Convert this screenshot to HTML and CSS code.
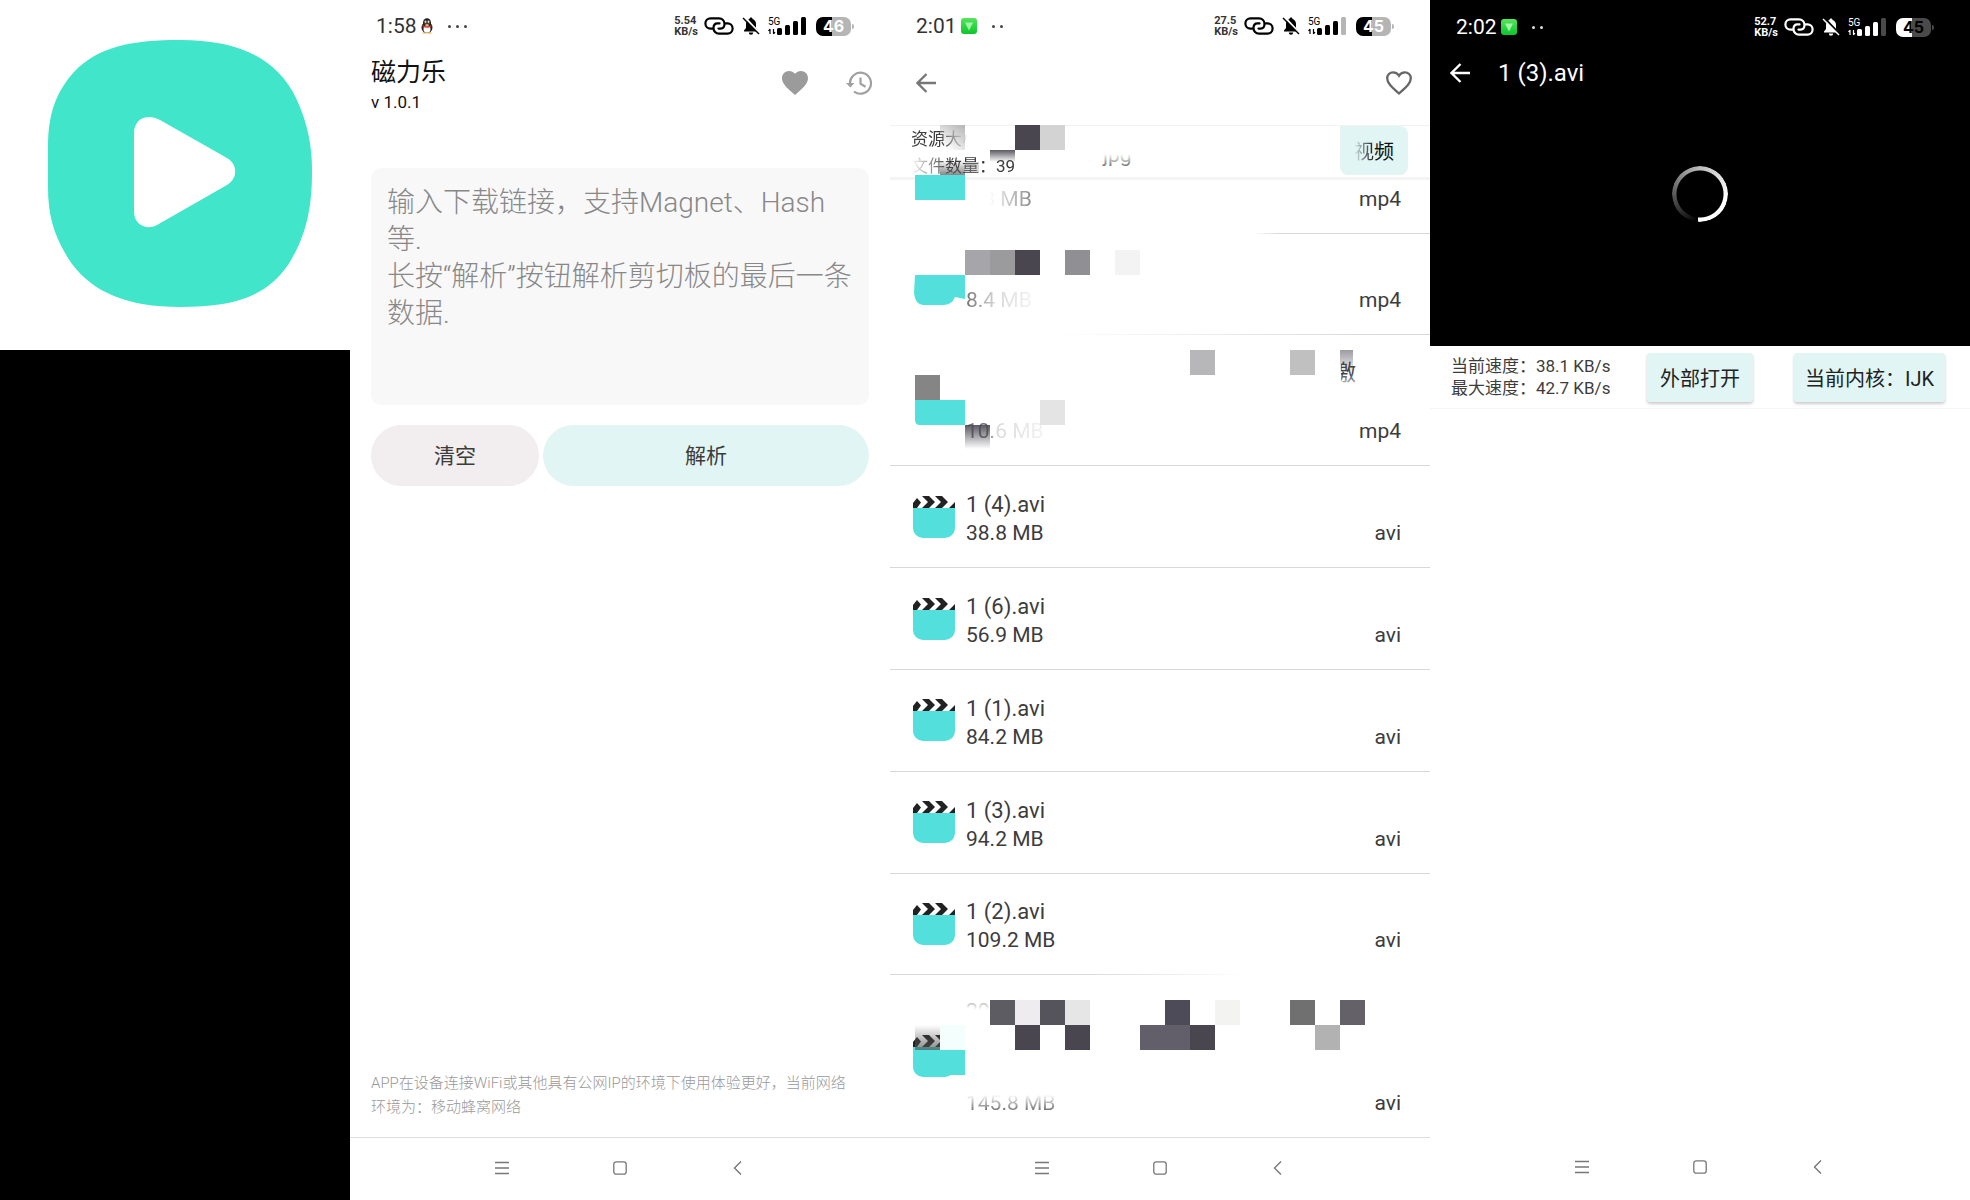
FILE: index.html
```html
<!DOCTYPE html>
<html lang="zh-CN">

<head>
    <meta charset="UTF-8">
    <meta name="viewport" content="width=device-width, initial-scale=1.0">
    <title>磁力乐</title>
    <link rel="stylesheet" href="styles.css">
</head>

<body>
    <!-- Shared icons -->
    <svg class="sprite" aria-hidden="true">
        <symbol id="link" viewBox="0 0 30 18">
            <path d="M9 11.6H6.5a5.1 5.1 0 0 1 0-10.200H15c3.200 0 5.500 2.500 5.500 5.600 0 2.800-1.700 4.600-4 4.600h-2M21 6.400h2.500a5.100 5.100 0 0 1 0 10.200H15c-3.200 0-5.500-2.500-5.500-5.600 0-2.800 1.700-4.600 4-4.600h2" fill="none" stroke="currentColor" stroke-width="2.200" stroke-linecap="round" />
        </symbol>
        <symbol id="bell" viewBox="0 0 18 18">
            <path d="M9 .5c.9 0 1.500.6 1.500 1.400C12.800 2.600 14 4.500 14 7v4l2 2.500v1H2v-1L4 11V7c0-2.500 1.200-4.400 3.500-5.100C7.500 1.100 8.100.5 9 .5zM6.800 15.500h4.400a2.200 2.200 0 0 1-4.400 0z" fill="currentColor" />
            <path class="slash" d="M2.500 0L18 16.500" stroke-width="2" />
            <path d="M1 1l16 16" stroke="currentColor" stroke-width="1.500" />
        </symbol>
        <symbol id="signal" viewBox="0 0 40 18">
            <path d="M2 17v-5M2 12l-1.500 2M5.500 12v5M5.500 17l1.500-2" stroke="currentColor" stroke-width="1.200" fill="none" />
            <rect x="9" y="11" width="5" height="7" rx="1.500" fill="currentColor" />
            <rect x="17" y="8" width="5" height="10" rx="1.500" fill="currentColor" />
            <rect x="25" y="4" width="5" height="14" rx="1.500" fill="currentColor" />
            <rect class="bar4" x="33" y="0" width="5" height="18" rx="1.500" />
        </symbol>
        <symbol id="qq" viewBox="0 0 12 16">
            <ellipse cx="6" cy="9.500" rx="5.500" ry="5.500" fill="#26201f" />
            <ellipse cx="6" cy="5" rx="4" ry="4.800" fill="#26201f" />
            <ellipse cx="6" cy="11" rx="3.500" ry="3.800" fill="#fff" />
            <ellipse cx="4.500" cy="3.800" rx="1" ry="1.300" fill="#ddd" />
            <ellipse cx="7.500" cy="3.800" rx="1" ry="1.300" fill="#ddd" />
            <path d="M1.500 7q4.500 2.500 9 0v1.500q-4.500 2.500-9 0z" fill="#d8322b" />
            <path d="M3 5.700h6L6 7.200zM1.500 14.500h4v1h-4zM6.500 14.500h4v1h-4z" fill="#f1a62c" />
        </symbol>
        <symbol id="badge" viewBox="0 0 16 16">
            <rect width="16" height="16" rx="3" fill="url(#badgeFill)" />
            <path d="M4 4.500h8L8 12.500z" fill="#a5f2aa" />
        </symbol>
        <symbol id="back" viewBox="0 0 20 20">
            <path d="M10.500 1L1.500 10l9 9M1.500 10H20" fill="none" stroke="currentColor" stroke-width="2.300" />
        </symbol>
        <symbol id="nav-menu" viewBox="0 0 14 14">
            <path d="M0 1.500h14M0 7h14M0 12.500h14" stroke="currentColor" stroke-width="1.300" />
        </symbol>
        <symbol id="nav-home" viewBox="0 0 14 14">
            <rect x=".8" y=".8" width="12.400" height="12.400" rx="2.500" fill="none" stroke="currentColor" stroke-width="1.300" />
        </symbol>
        <symbol id="nav-back" viewBox="0 0 14 14">
            <path d="M10 .5L3.500 7l6.500 6.500" fill="none" stroke="currentColor" stroke-width="1.400" />
        </symbol>
        <symbol id="clap" viewBox="0 0 42 42">
            <path d="M0 12h42v20a10 10 0 0 1-10 10H10A10 10 0 0 1 0 32z" fill="#53dfdc" />
            <path d="M0 12V7l4-5 4 4.500L4 12zM9 0h7l6 6-6 6H9l6-6zM22 0h7l6 6-6 6h-7l6-6zM42 6v6h-6z" fill="#222" />
        </symbol>
        <defs>
            <linearGradient id="badgeFill" x2="0" y2="1">
                <stop stop-color="#55e55c" />
                <stop offset="1" stop-color="#0cc52c" />
            </linearGradient>
        </defs>
    </svg>

    <main class="gallery">
        <section class="logo-panel">
            <div class="logo-box">
                <svg viewBox="0 0 350 350" role="img" aria-label="磁力乐">
                    <path d="M180 40C238 40 277 58 296 98C308 124 312 146 312 171C312 206 307 235 288 265C266 297 233 307 180 307C127 307 93 292 72 264C54 238 48 216 48 187V146C48 114 56 92 74 72C98 46 134 40 180 40Z" fill="#40e5ca" />
                    <path d="M134 133C134 118 148 113 160 120L227 158C238 164 238 179 227 185L157 225C146 231 134 224 134 212Z" fill="#fff" />
                </svg>
            </div>
        </section>

        <!-- Home screen -->
        <section class="phone">
            <div class="status">
                <span class="time">1:58</span>
                <svg class="qq"><use href="#qq" /></svg>
                <span class="dots"><i></i><i></i><i></i></span>
                <span class="speed"><span>5.54</span><span>KB/s</span></span>
                <svg class="link"><use href="#link" /></svg>
                <svg class="bell"><use href="#bell" /></svg>
                <span class="signal full"><b>5G</b><svg><use href="#signal" /></svg></span>
                <span class="battery">46</span>
            </div>
            <header class="home-head">
                <div>
                    <h1>磁力乐</h1>
                    <p>v 1.0.1</p>
                </div>
                <div class="head-actions">
                    <button class="icon-btn" aria-label="收藏">
                        <svg viewBox="0 0 26 24"><path d="M13 24l-2-1.700C4 16 0 12.300 0 7.200 0 3.100 3.100 0 7.100 0 9.400 0 11.600 1.100 13 2.800 14.400 1.100 16.600 0 18.900 0 22.900 0 26 3.100 26 7.200c0 5.100-4 8.800-11 15.100z" fill="#9b9b9b" /></svg>
                    </button>
                    <button class="icon-btn" aria-label="历史">
                        <svg viewBox="0 0 26 24"><path d="M4 13A10.500 10.500 0 1 1 8 20.500M14.500 6.500v6.200l5 3" fill="none" stroke="#a0a0a0" stroke-width="2.200" /><path d="M0 12h8.500l-4.200 4.500z" fill="#a0a0a0" /></svg>
                    </button>
                </div>
            </header>
            <form class="parse-form">
                <textarea aria-label="下载链接" placeholder="输入下载链接，支持Magnet、Hash等.&#10;长按“解析”按钮解析剪切板的最后一条数据."></textarea>
                <div class="form-actions">
                    <button type="reset" class="clear-btn">清空</button>
                    <button type="button" class="parse-btn">解析</button>
                </div>
            </form>
            <p class="tip">APP在设备连接WiFi或其他具有公网IP的环境下使用体验更好，当前网络<br>环境为：移动蜂窝网络</p>
            <nav class="navbar lined">
                <button aria-label="菜单"><svg><use href="#nav-menu" /></svg></button>
                <button aria-label="主页"><svg><use href="#nav-home" /></svg></button>
                <button aria-label="返回"><svg><use href="#nav-back" /></svg></button>
            </nav>
        </section>

        <!-- File list -->
        <section class="phone">
            <div class="status">
                <span class="time">2:01</span>
                <svg class="badge"><use href="#badge" /></svg>
                <span class="dots"><i></i><i></i></span>
                <span class="speed"><span>27.5</span><span>KB/s</span></span>
                <svg class="link"><use href="#link" /></svg>
                <svg class="bell"><use href="#bell" /></svg>
                <span class="signal"><b>5G</b><svg><use href="#signal" /></svg></span>
                <span class="battery">45</span>
            </div>
            <header class="list-head">
                <button class="icon-btn back" aria-label="返回"><svg><use href="#back" /></svg></button>
                <button class="icon-btn" aria-label="收藏">
                    <svg viewBox="0 0 26 24"><path d="M13 22.500l-1.500-1.300C5 15.300 1.200 11.800 1.200 7.300c0-3.400 2.600-6 5.900-6 2.400 0 4.700 1.400 5.900 3.500 1.200-2.100 3.500-3.500 5.900-3.500 3.300 0 5.900 2.600 5.900 6 0 4.500-3.800 8-10.300 13.900z" fill="none" stroke="#666" stroke-width="2.300" /></svg>
                </button>
            </header>
            <div class="summary">
                <div class="summary-text">
                    <p class="fade-size">资源大小</p>
                    <p class="fade-count">文件数量：39</p>
                </div>
                <button class="video-btn"><span>视</span>频</button>
            </div>
            <ul class="files">
                <li class="file line-right-short">
                    <div class="info"><span class="size fade-a">1.3 MB</span></div>
                    <span class="ext">mp4</span>
                </li>
                <li class="file line-right">
                    <div class="info"><span class="size fade-b">8.4 MB</span></div>
                    <span class="ext">mp4</span>
                </li>
                <li class="file">
                    <div class="info"><span class="size fade-c">10.6 MB</span></div>
                    <span class="ext">mp4</span>
                </li>
                <li class="file">
                    <svg class="clap"><use href="#clap" /></svg>
                    <div class="info"><span class="name">1 (4).avi</span><span class="size">38.8 MB</span></div>
                    <span class="ext">avi</span>
                </li>
                <li class="file">
                    <svg class="clap"><use href="#clap" /></svg>
                    <div class="info"><span class="name">1 (6).avi</span><span class="size">56.9 MB</span></div>
                    <span class="ext">avi</span>
                </li>
                <li class="file">
                    <svg class="clap"><use href="#clap" /></svg>
                    <div class="info"><span class="name">1 (1).avi</span><span class="size">84.2 MB</span></div>
                    <span class="ext">avi</span>
                </li>
                <li class="file">
                    <svg class="clap"><use href="#clap" /></svg>
                    <div class="info"><span class="name">1 (3).avi</span><span class="size">94.2 MB</span></div>
                    <span class="ext">avi</span>
                </li>
                <li class="file line-left">
                    <svg class="clap"><use href="#clap" /></svg>
                    <div class="info"><span class="name">1 (2).avi</span><span class="size">109.2 MB</span></div>
                    <span class="ext">avi</span>
                </li>
                <li class="file last">
                    <svg class="clap"><use href="#clap" /></svg>
                    <div class="info"><span class="size fade-d">145.8 MB</span></div>
                    <span class="ext">avi</span>
                </li>
            </ul>
            <nav class="navbar lined">
                <button aria-label="菜单"><svg><use href="#nav-menu" /></svg></button>
                <button aria-label="主页"><svg><use href="#nav-home" /></svg></button>
                <button aria-label="返回"><svg><use href="#nav-back" /></svg></button>
            </nav>

            <!-- Mosaic over private names, 25px cells -->
            <svg class="mosaic" width="540" height="1137" viewBox="0 0 540 1137" aria-hidden="true">
                <defs>
                    <linearGradient id="fadeDown" x2="0" y2="1">
                        <stop stop-color="#494650" stop-opacity=".9" />
                        <stop offset="1" stop-color="#494650" stop-opacity="0" />
                    </linearGradient>
                    <linearGradient id="fadeUp" x2="0" y2="1">
                        <stop stop-color="#555" stop-opacity="0" />
                        <stop offset="1" stop-color="#555" stop-opacity=".7" />
                    </linearGradient>
                    <linearGradient id="fadeCorner" x1="1" y1="0" x2=".3" y2="1">
                        <stop stop-color="#b4b4b4" />
                        <stop offset="1" stop-color="#b4b4b4" stop-opacity="0" />
                    </linearGradient>
                    <linearGradient id="whiteOut" x2="0" y2="1">
                        <stop offset=".4" stop-color="#fff" />
                        <stop offset="1" stop-color="#fff" stop-opacity="0" />
                    </linearGradient>
                    <linearGradient id="whiteUp" x2="0" y2="1">
                        <stop stop-color="#fff" stop-opacity="0" />
                        <stop offset=".5" stop-color="#fff" />
                    </linearGradient>
                </defs>
                <rect x="50" y="125" width="25" height="25" fill="url(#fadeCorner)" />
                <rect x="125" y="125" width="25" height="25" fill="#494650" />
                <rect x="150" y="125" width="25" height="25" fill="#d3d3d4" />
                <rect x="100" y="150" width="25" height="12" fill="url(#fadeDown)" />
                <rect x="50" y="160" width="25" height="15" fill="url(#fadeUp)" />
                <rect x="75" y="162" width="14" height="11" fill="#999" opacity=".4" />
                <text x="213" y="162" font-size="21" fill="#777">jpg</text>
                <rect x="205" y="146" width="45" height="20" fill="url(#whiteOut)" />
                <rect x="25" y="175" width="50" height="25" fill="#53dfdc" />

                <path d="M75 250h25v25H75z" fill="#a6a6aa" />
                <path d="M100 250h25v25h-25z" fill="#9b9b9e" />
                <path d="M125 250h25v25h-25z" fill="#494650" />
                <path d="M175 250h25v25h-25z" fill="#8f8f94" />
                <path d="M225 250h25v25h-25z" fill="#f3f3f3" />
                <path d="M25 275h50v24l-10-2q-3 8-12 8H33q-8-1-9-12z" fill="#53dfdc" />

                <path d="M300 350h25v25h-25z" fill="#b7b7ba" />
                <path d="M400 350h25v25h-25z" fill="#c0c0c1" />
                <text x="444" y="380" font-size="22" fill="#444">激</text>
                <path d="M440 358h11v30h-11z" fill="#fff" />
                <path d="M450 374h18v14h-18z" fill="url(#whiteUp)" opacity=".5" />
                <path d="M450 350h13v25h-13z" fill="url(#fadeDown)" opacity=".6" />
                <path d="M25 375h25v25H25z" fill="#858586" />
                <path d="M25 400h50v25H30q-5 0-5-5z" fill="#53dfdc" />
                <path d="M150 400h25v25h-25z" fill="#e4e4e4" />
                <path d="M75 425h25v24H75z" fill="url(#fadeDown)" />

                <text x="76" y="1018" font-size="21" fill="#999">20</text>
                <path d="M75 998h25v24H75z" fill="url(#whiteUp)" />
                <path d="M25 1025h25v25H25z" fill="url(#fadeUp)" />
                <path d="M50 1025h25v25H50z" fill="#f3fefd" />
                <path d="M40 1050h35v25H40z" fill="#53dfdc" />
                <path d="M100 1000h25v25h-25z" fill="#5d5c62" />
                <path d="M125 1000h25v25h-25z" fill="#eeecee" />
                <path d="M150 1000h25v25h-25z" fill="#55535b" />
                <path d="M175 1000h25v25h-25z" fill="#e6e6e7" />
                <path d="M125 1025h25v25h-25zM175 1025h25v25h-25zM300 1025h25v25h-25z" fill="#494650" />
                <path d="M250 1025h50v25h-50z" fill="#625f6b" />
                <path d="M275 1000h25v25h-25z" fill="#4e4b59" />
                <path d="M325 1000h25v25h-25z" fill="#f3f3f2" />
                <path d="M400 1000h25v25h-25z" fill="#707070" />
                <path d="M425 1025h25v25h-25z" fill="#b2b2b3" />
                <path d="M450 1000h25v25h-25z" fill="#646268" />
            </svg>
        </section>

        <!-- Player -->
        <section class="phone">
            <div class="player">
                <div class="status dark">
                    <span class="time">2:02</span>
                    <svg class="badge"><use href="#badge" /></svg>
                    <span class="dots"><i></i><i></i></span>
                    <span class="speed"><span>52.7</span><span>KB/s</span></span>
                    <svg class="link"><use href="#link" /></svg>
                    <svg class="bell"><use href="#bell" /></svg>
                    <span class="signal"><b>5G</b><svg><use href="#signal" /></svg></span>
                    <span class="battery">45</span>
                </div>
                <header class="player-head">
                    <button class="icon-btn back" aria-label="返回"><svg><use href="#back" /></svg></button>
                    <h2>1 (3).avi</h2>
                </header>
                <div class="spinner"></div>
            </div>
            <div class="player-bar">
                <div class="speeds">
                    <p>当前速度：38.1 KB/s</p>
                    <p>最大速度：42.7 KB/s</p>
                </div>
                <button class="flat-btn">外部打开</button>
                <button class="flat-btn core">当前内核：IJK</button>
            </div>
            <nav class="navbar">
                <button aria-label="菜单"><svg><use href="#nav-menu" /></svg></button>
                <button aria-label="主页"><svg><use href="#nav-home" /></svg></button>
                <button aria-label="返回"><svg><use href="#nav-back" /></svg></button>
            </nav>
        </section>
    </main>
</body>

</html>
```
FILE: styles.css
```css
* {
    box-sizing: border-box;
    margin: 0;
    padding: 0;
}

body {
    background: #fff;
    color: #3c3c3c;
    font-family: Roboto, "Noto Sans CJK SC", sans-serif;
}

button {
    border: none;
    background: none;
    color: inherit;
    font-family: inherit;
    cursor: pointer;
}

.sprite {
    position: absolute;
    width: 0;
    height: 0;
}

.gallery {
    display: grid;
    grid-template-columns: 35fr 54fr 54fr 54fr;
    min-height: 100vh;
}

.logo-panel {
    background: #000;
}

.logo-box {
    background: #fff;
    aspect-ratio: 1 / 1;
}

.logo-box svg {
    display: block;
    width: 100%;
}

.phone {
    position: relative;
    display: flex;
    flex-direction: column;
    min-width: 0;
    background: #fff;
}

/* status bar */
.status {
    --weak: #b5b5b5;
    --slash: #fff;
    display: flex;
    align-items: center;
    height: 52px;
    padding: 0 39px 0 26px;
    color: #000;
}

.status .time {
    margin-right: 4px;
    font-size: 21px;
    color: #333;
}

.status .qq {
    width: 12px;
    height: 16px;
}

.status .badge {
    width: 16px;
    height: 16px;
}

.dots {
    display: flex;
    gap: 5px;
    margin-left: 15px;
}

.dots i {
    width: 3px;
    height: 3px;
    border-radius: 50%;
    background: #444;
}

.speed {
    display: flex;
    flex-direction: column;
    margin-left: auto;
    font-size: 11px;
    font-weight: 700;
    line-height: 11px;
    color: #333;
}

.status .link {
    width: 30px;
    height: 18px;
    margin-left: 6px;
}

.status .bell {
    width: 18px;
    height: 18px;
    margin-left: 8px;
}

.slash {
    stroke: var(--slash);
}

.signal {
    position: relative;
    width: 40px;
    height: 18px;
    margin-left: 8px;
}

.signal svg {
    display: block;
    width: 40px;
    height: 18px;
}

.signal b {
    position: absolute;
    top: 0;
    left: 0;
    font-size: 10px;
    font-weight: 400;
    line-height: 10px;
}

.bar4 {
    fill: var(--weak);
}

.full {
    --weak: #000;
}

.battery {
    position: relative;
    width: 35px;
    height: 19px;
    margin-left: 8px;
    border-radius: 7px;
    background: linear-gradient(to right, #000 45%, var(--weak) 45%);
    color: #fff;
    font-family: Inter, sans-serif;
    font-size: 16px;
    font-weight: 700;
    line-height: 19px;
    text-align: center;
}

.battery::after {
    content: "";
    position: absolute;
    top: 7px;
    right: -3px;
    width: 2px;
    height: 5px;
    border-radius: 0 2px 2px 0;
    background: var(--weak);
}

.dark,
.dark .time,
.dark .speed {
    color: #fff;
}

.dark {
    --weak: #4a4a4a;
    --slash: #000;
    height: 54px;
}

.dark .dots i {
    background: #ddd;
}

.dark .battery {
    background: linear-gradient(to right, #fff 45%, var(--weak) 45%);
    color: #000;
}

/* home */
.home-head {
    display: flex;
    justify-content: space-between;
    align-items: flex-start;
    padding: 4px 18px 0 21px;
    height: 116px;
    color: #111;
}

.home-head h1 {
    font-size: 25px;
    font-weight: 400;
    line-height: 34px;
}

.home-head p {
    font-size: 17px;
    line-height: 24px;
}

.head-actions {
    display: flex;
    gap: 38px;
    padding-top: 15px;
}

.icon-btn svg {
    display: block;
    width: 26px;
    height: 24px;
}

.icon-btn.back svg {
    width: 20px;
    height: 20px;
}

.parse-form {
    padding: 0 21px;
}

.parse-form textarea {
    display: block;
    width: 100%;
    height: 237px;
    padding: 16px;
    border: none;
    border-radius: 10px;
    background: #f8f8f8;
    resize: none;
    overflow: hidden;
    font-family: inherit;
    font-size: 28px;
    font-weight: 300;
    line-height: 37px;
}

.parse-form textarea::placeholder {
    color: #888;
}

.form-actions {
    display: flex;
    gap: 4px;
    margin-top: 20px;
}

.form-actions button {
    height: 61px;
    padding-bottom: 3px;
    border-radius: 31px;
    font-size: 21px;
}

.clear-btn {
    flex: 168;
    background: #f2edee;
}

.parse-btn {
    flex: 326;
    background: #e1f5f4;
}

.tip {
    margin-top: auto;
    padding: 0 21px 18px;
    color: #999;
    font-size: 15px;
    font-weight: 300;
    line-height: 24px;
}

.navbar {
    display: flex;
    justify-content: center;
    align-items: center;
    gap: 78px;
    height: 63px;
    color: #777;
}

.navbar.lined {
    border-top: 1px solid #ddd;
}

.navbar button {
    width: 40px;
    height: 40px;
}

.navbar svg {
    width: 14px;
    height: 14px;
}

/* file list */
.list-head {
    display: flex;
    justify-content: space-between;
    align-items: center;
    height: 74px;
    padding: 0 18px 12px 26px;
    border-bottom: 1px solid #f2f2f2;
}

.list-head .back {
    color: #777;
}

.summary {
    display: flex;
    justify-content: space-between;
    height: 54px;
    padding-left: 21px;
    padding-right: 22px;
    border-bottom: 3px solid #f4f4f4;
    font-size: 17px;
}

.summary p {
    line-height: 27px;
}

.fade-size {
    width: 68px;
    mask-image: linear-gradient(to right, #000 50%, transparent 85%);
}

.fade-count {
    mask-image: linear-gradient(to right, transparent, #000 36%);
}

.video-btn {
    width: 68px;
    height: 49px;
    border-radius: 0 8px 8px 8px;
    background: #e1f5f4;
    color: #111;
    font-size: 20px;
}

.video-btn span {
    mask-image: linear-gradient(to right, transparent, #000);
}

/* row heights share the free space */
.files {
    display: grid;
    flex: 1;
    grid-template-rows: 54fr 101fr 132fr repeat(5, 102fr) 162fr;
    list-style: none;
}

.file {
    display: flex;
    align-items: flex-end;
    min-height: 0;
    padding: 0 29px 19px 23px;
    border-bottom: 1px solid #d8d8d8;
}

.file.last {
    border-bottom: none;
}

.line-right-short {
    border-image: linear-gradient(to right, #fff 67%, #d8d8d8 72%) 1;
}

.line-right {
    border-image: linear-gradient(to right, #fff 30%, #d8d8d8 90%) 1;
}

.line-left {
    border-image: linear-gradient(to right, #d8d8d8 35%, #fff 66%) 1;
}

.clap {
    align-self: center;
    width: 42px;
    height: 42px;
    margin-right: -42px;
    margin-bottom: -19px;
}

.info {
    display: flex;
    flex-direction: column;
    align-items: flex-start;
    padding-left: 53px;
}

.name {
    font-size: 22px;
    line-height: 29px;
}

.size,
.ext {
    font-size: 21px;
    line-height: 29px;
}

.ext {
    margin-left: auto;
}

.fade-a {
    mask-image: linear-gradient(to right, transparent 35%, #0009);
}

.fade-b {
    mask-image: linear-gradient(to right, #000b, #0003 45%, #0001);
}

.fade-c {
    mask-image: linear-gradient(to right, #000b 30%, #0003 38%, #0001);
}

.fade-d {
    mask-image: linear-gradient(to bottom, transparent 20%, #000c 80%);
}

.mosaic {
    position: absolute;
    top: 0;
    left: 0;
    pointer-events: none;
}

/* player */
.player {
    height: 346px;
    background: #000;
    color: #fff;
}

.player-head {
    display: flex;
    align-items: center;
    gap: 28px;
    height: 38px;
    padding-left: 20px;
}

.player-head h2 {
    font-size: 24px;
    font-weight: 400;
    line-height: 38px;
}

.spinner {
    width: 56px;
    height: 56px;
    margin: 74px auto 0;
    border-radius: 50%;
    background: conic-gradient(from 185deg, #000, #555 22%, #bbb 48%, #fff 75%);
    mask-image: radial-gradient(circle, transparent 23px, #000 24px);
}

.player-bar {
    display: flex;
    align-items: center;
    height: 63px;
    padding: 0 25px 0 21px;
    border-bottom: 1px solid #f5f5f5;
}

.speeds {
    font-size: 17px;
    line-height: 22px;
    width: 196px;
}

.flat-btn {
    height: 49px;
    padding: 0 13px;
    border-radius: 3px;
    background: #e1f5f4;
    box-shadow: 0 2px 3px #0003;
    color: #222;
    font-size: 20px;
}

.flat-btn.core {
    margin-left: auto;
    padding: 0 11px;
}

.player-bar + .navbar {
    margin-top: auto;
}
```
